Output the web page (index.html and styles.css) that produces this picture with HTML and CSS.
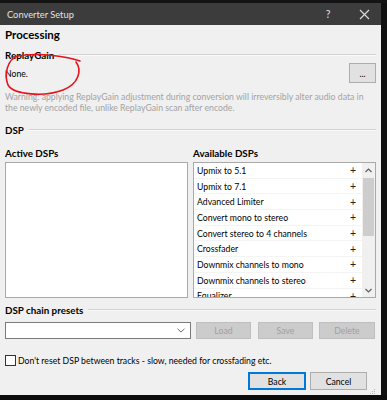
FILE: index.html
```html
<!DOCTYPE html>
<html>
<head>
<meta charset="utf-8">
<link rel="stylesheet" href="styles.css">
</head>
<body>
<div class="screen">
  <div class="topstrip"></div>
  <div class="desk">
    <div class="window">
      <div class="titlebar">
        <span class="title">Converter Setup</span>
        <span class="tb-help">?</span>
        <span class="tb-close">
          <svg width="11" height="11" viewBox="0 0 11 11"><path d="M1 1L10 10M10 1L1 10" stroke="#d8d8d8" stroke-width="1.2" fill="none"/></svg>
        </span>
      </div>
      <div class="content">
        <div class="page-title">Processing</div>
        <div class="group-head first"><span>ReplayGain</span><i class="rule"></i></div>
        <div class="rg-row">
          <span class="rg-value">None.</span>
          <button class="btn dots">...</button>
        </div>
        <div class="warning">Warning: applying ReplayGain adjustment during conversion will irreversibly alter audio data in the newly encoded file, unlike ReplayGain scan after encode.</div>
        <div class="group-head dsp"><span>DSP</span><i class="rule"></i></div>
        <div class="columns">
          <div class="col">
            <div class="col-head">Active DSPs</div>
            <div class="listbox"></div>
          </div>
          <div class="col">
            <div class="col-head">Available DSPs</div>
            <div class="listbox avail">
              <div class="rows">
                <div class="row"><span>Upmix to 5.1</span><b>+</b></div>
                <div class="row"><span>Upmix to 7.1</span><b>+</b></div>
                <div class="row"><span>Advanced Limiter</span><b>+</b></div>
                <div class="row"><span>Convert mono to stereo</span><b>+</b></div>
                <div class="row"><span>Convert stereo to 4 channels</span><b>+</b></div>
                <div class="row"><span>Crossfader</span><b>+</b></div>
                <div class="row"><span>Downmix channels to mono</span><b>+</b></div>
                <div class="row"><span>Downmix channels to stereo</span><b>+</b></div>
                <div class="row"><span>Equalizer</span><b>+</b></div>
              </div>
              <div class="scrollbar">
                <div class="sb-arrow">
                  <svg width="7" height="5" viewBox="0 0 7 5"><path d="M0.5 4L3.5 1L6.5 4" stroke="#606060" stroke-width="1.2" fill="none"/></svg>
                </div>
                <div class="sb-track"><div class="sb-thumb"></div></div>
                <div class="sb-arrow">
                  <svg width="7" height="5" viewBox="0 0 7 5"><path d="M0.5 1L3.5 4L6.5 1" stroke="#606060" stroke-width="1.2" fill="none"/></svg>
                </div>
              </div>
            </div>
          </div>
        </div>
        <div class="group-head presets"><span>DSP chain presets</span><i class="rule"></i></div>
        <div class="preset-row">
          <div class="combo">
            <svg width="8" height="5" viewBox="0 0 8 5"><path d="M0.5 0.8L4 4L7.5 0.8" stroke="#707070" stroke-width="1" fill="none"/></svg>
          </div>
          <button class="btn disabled load">Load</button>
          <button class="btn disabled save">Save</button>
          <button class="btn disabled del">Delete</button>
        </div>
        <div class="check-row">
          <span class="checkbox"></span>
          <span class="check-label">Don't reset DSP between tracks - slow, needed for crossfading etc.</span>
        </div>
        <div class="button-row">
          <button class="btn back">Back</button>
          <button class="btn cancel">Cancel</button>
          <span class="grip">
            <svg width="6" height="6" viewBox="0 0 6 6" fill="#b8b8b8"><rect x="4" y="0" width="1" height="1"/><rect x="2" y="2" width="1" height="1"/><rect x="4" y="2" width="1" height="1"/><rect x="0" y="4" width="1" height="1"/><rect x="2" y="4" width="1" height="1"/><rect x="4" y="4" width="1" height="1"/></svg>
          </span>
        </div>
      </div>
    </div>
    <div class="side"></div>
  </div>
</div>
<svg class="annot" width="387" height="400" viewBox="0 0 387 400">
  <path d="M80 61 C68 57, 40 52, 18 56 C7 59, 4 75, 8 85 C14 95, 45 97, 63 90 C79 84, 82 70, 76 62" stroke="#e3141b" stroke-width="1.6" fill="none" stroke-linecap="round"/>
</svg>
</body>
</html>
```
FILE: styles.css
```css
* { box-sizing: border-box; }
html, body { margin: 0; padding: 0; }
body {
  width: 387px;
  height: 400px;
  overflow: hidden;
  background: #0c0c0c;
  font-family: Lato, "Noto Sans", sans-serif;
  font-size: 8.7px;
  color: #000;
  position: relative;
}
.screen { width: 387px; height: 400px; display: flex; flex-direction: column; }
.topstrip { height: 3px; background: #141414; }
.desk { display: flex; height: 392px; }
.window {
  width: 381px;
  height: 392px;
  background: #f0f0f0;
  display: flex;
  flex-direction: column;
}
.side { flex: 1; background: #101010; }
.titlebar {
  height: 22px;
  background: #3c3c3c;
  display: flex;
  align-items: center;
  color: #e2e2e2;
  font-size: 9.3px;
  padding-left: 7px;
}
.title { flex: 1; }
.tb-help { width: 20px; text-align: center; margin-right: 16px; font-size: 10.5px; }
.tb-close { width: 20px; display: flex; justify-content: center; margin-right: 7px; }
.content { padding: 0 5px 0 5px; display: flex; flex-direction: column; }
.page-title {
  margin-top: 3px;
  height: 14px;
  line-height: 14px;
  font-weight: bold;
  font-size: 11.5px;
}
.group-head {
  display: flex;
  align-items: center;
  height: 14px;
  line-height: 14px;
  font-weight: bold;
  font-size: 9.8px;
}
.group-head .rule {
  flex: 1;
  height: 2px;
  border-top: 1px solid #d2d2d2;
  border-bottom: 1px solid #fafafa;
  margin-left: 5px;
}
.group-head.first { margin-top: 6px; }
.group-head.dsp { margin-top: 10px; }
.group-head.presets { margin-top: 5px; }
.rg-row {
  margin-top: 1px;
  height: 20px;
  display: flex;
  align-items: center;
  justify-content: space-between;
}
.btn {
  font-family: inherit;
  font-size: 8.7px;
  background: #e1e1e1;
  border: 1px solid #adadad;
  color: #000;
  padding: 0;
  margin: 0;
}
.dots { width: 27px; height: 20px; }
.warning {
  margin-top: 9px;
  color: #a3a3a3;
  line-height: 10.5px;
  width: 366px;
}
.columns { display: flex; justify-content: space-between; margin-top: 9px; }
.col { width: 183px; display: flex; flex-direction: column; }
.col-head { height: 14px; line-height: 14px; font-weight: bold; font-size: 9.8px; }
.listbox {
  margin-top: 2px;
  height: 136px;
  background: #fff;
  border: 1px solid #a9a9a9;
}
.listbox.avail { display: flex; overflow: hidden; }
.rows { flex: 1; overflow: hidden; }
.row {
  height: 15.7px;
  display: flex;
  align-items: center;
  justify-content: space-between;
  padding-left: 3px;
  padding-right: 6px;
  border-bottom: 1px solid #f4f4f4;
}
.row b { font-weight: normal; font-size: 10.5px; color: #222; }
.scrollbar { width: 13px; display: flex; flex-direction: column; background: #f0f0f0; }
.sb-arrow { height: 14px; display: flex; align-items: center; justify-content: center; }
.sb-track { flex: 1; }
.sb-thumb { height: 58px; background: #cdcdcd; margin: 1px 1px 0 1px; }
.preset-row { margin-top: 5px; display: flex; height: 17px; }
.combo {
  width: 186px;
  background: #fff;
  border: 1px solid #7a7a7a;
  display: flex;
  align-items: center;
  justify-content: flex-end;
  padding-right: 5px;
}
.btn.disabled { background: #cccccc; border-color: #bfbfbf; color: #a0a0a0; width: 55px; }
.load { margin-left: 5px; }
.save { margin-left: 7px; }
.del { margin-left: 6px; width: 56px !important; }
.check-row { margin-top: 14px; height: 14px; display: flex; align-items: center; }
.checkbox {
  width: 11px;
  height: 11px;
  border: 1px solid #333;
  background: #fff;
  margin-right: 2px;
}
.button-row {
  margin-top: 5px;
  height: 18px;
  display: flex;
  justify-content: flex-end;
  align-items: flex-start;
}
.back { width: 58px; height: 18px; border: 2px solid #0078d7; }
.cancel { width: 57px; height: 18px; margin-left: 4px; }
.grip { width: 9px; align-self: flex-end; display: flex; justify-content: flex-end; margin-bottom: -5px; }
.annot { position: absolute; left: 0; top: 0; pointer-events: none; }
```
